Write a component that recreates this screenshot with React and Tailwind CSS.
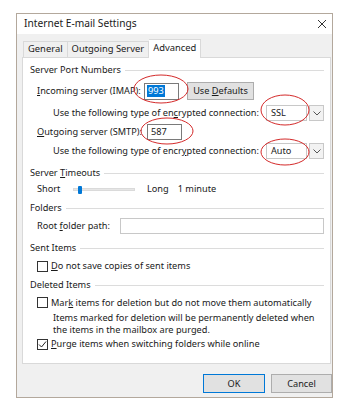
import React from 'react';

const FONT = { fontFamily: '"Noto Sans", "Open Sans", Arial, sans-serif' };

function U({ children }) {
  return <span className="underline underline-offset-[1px]">{children}</span>;
}

function Section({ title, className = '' }) {
  return (
    <div className={`flex items-center h-[16px] pl-[7px] pr-[6px] ${className}`}>
      <span>{title}</span>
      <div className="flex-1 h-px bg-[#dcdcdc] ml-[4px]" />
    </div>
  );
}

function Combo({ value }) {
  return (
    <div className="flex h-[16px]">
      <div className="w-[41px] h-full border border-[#c8c8c8] bg-white flex items-center pl-[4px]">{value}</div>
      <div className="w-[15px] h-full border border-[#c8c8c8] bg-[#f2f2f2] flex items-center justify-center ml-[2px]">
        <svg width="8" height="5" viewBox="0 0 8 5" fill="none">
          <path d="M0.5 0.5L4 4L7.5 0.5" stroke="#555" strokeWidth="1" />
        </svg>
      </div>
    </div>
  );
}

function Check({ checked }) {
  return (
    <div className="w-[11px] h-[11px] border border-[#333] bg-white flex items-center justify-center mr-[3px] shrink-0">
      {checked && (
        <svg width="9" height="9" viewBox="0 0 9 9" fill="none">
          <path d="M1 4.5L3.5 7L8 1.5" stroke="#222" strokeWidth="1" />
        </svg>
      )}
    </div>
  );
}

export default function App() {
  return (
    <div className="w-[345px] h-[400px] bg-white pt-[13px] pl-[16px] text-[9.2px] text-[#1a1a1a] whitespace-nowrap" style={FONT}>
      <div className="relative w-[317px] h-[385px] border border-[#b3a89c] bg-[#f0f0f0] flex flex-col">
        {/* title bar */}
        <div className="h-[20px] bg-white flex items-center justify-between pl-[7px] pr-[5px]">
          <span className="text-[10.2px]">Internet E-mail Settings</span>
          <svg width="10" height="10" viewBox="0 0 10 10" fill="none">
            <path d="M1 1L9 9M9 1L1 9" stroke="#333" strokeWidth="1" />
          </svg>
        </div>

        {/* tabs */}
        <div className="flex items-end pl-[6px] pt-[4px] h-[23px] text-[9.4px]">
          <div className="h-[16px] px-[4px] border border-[#d9d9d9] border-b-0 bg-[#f0f0f0] flex items-center">General</div>
          <div className="h-[16px] px-[4px] border border-[#d9d9d9] border-b-0 border-l-0 bg-[#f0f0f0] flex items-center">Outgoing Server</div>
          <div className="h-[19px] px-[4px] border border-[#d9d9d9] border-b-0 border-l-0 bg-white flex items-start pt-[1px] relative top-px z-10">Advanced</div>
        </div>

        {/* panel */}
        <div className="ml-[5px] mr-px h-[307px] bg-white border border-[#d9d9d9] pt-[4px] flex flex-col">
          <Section title="Server Port Numbers" />
          <div className="flex items-center h-[26px] pl-[14px]">
            <span className="w-[107px]"><U>I</U>ncoming server (IMAP):</span>
            <div className="w-[35px] h-[17px] border border-[#7a7a7a] bg-white flex items-center pl-[2px]">
              <span className="bg-[#0078d7] text-white px-[1px] leading-[12px]">993</span>
            </div>
            <div className="ml-[8px] w-[67px] h-[18px] border border-[#adadad] bg-[#e1e1e1] flex items-center justify-center">
              Use&nbsp;<U>D</U>efaults
            </div>
          </div>
          <div className="flex items-center justify-between h-[18px] pl-[30px] pr-[6px]">
            <span>Use the following type of en<U>c</U>rypted connection:</span>
            <Combo value="SSL" />
          </div>
          <div className="flex items-center h-[20px] pl-[14px]">
            <span className="w-[110px]"><U>O</U>utgoing server (SMTP):</span>
            <div className="w-[35px] h-[16px] border border-[#7a7a7a] bg-white flex items-center pl-[3px]">587</div>
          </div>
          <div className="flex items-center justify-between h-[18px] pl-[30px] pr-[6px]">
            <span>Use the following type of encr<U>y</U>pted connection:</span>
            <Combo value="Auto" />
          </div>

          <Section title={<>Server <U>T</U>imeouts</>} className="mt-[5px]" />
          <div className="flex items-center h-[16px] pl-[14px]">
            <span className="w-[36px]">Short</span>
            <div className="relative w-[62px] h-[3px] bg-[#e6e6e6] border border-[#dadada]">
              <div className="absolute left-[4px] -top-[3px] w-[4px] h-[8px] bg-[#0078d7] rounded-[1px]" />
            </div>
            <span className="ml-[12px]">Long</span>
            <span className="ml-[9px]">1 minute</span>
          </div>

          <Section title="Folders" className="mt-[3px]" />
          <div className="flex items-center h-[20px] pl-[14px] pr-[6px]">
            <span className="w-[83px]">Root <U>f</U>older path:</span>
            <div className="flex-1 h-[16px] border border-[#c8c8c8] bg-white" />
          </div>

          <Section title="Sent Items" className="mt-[4px]" />
          <div className="flex items-center h-[20px] pl-[14px]">
            <Check />
            <span><U>D</U>o not save copies of sent items</span>
          </div>

          <Section title="Deleted Items" className="mt-[1px]" />
          <div className="flex items-center h-[19px] pl-[14px]">
            <Check />
            <span>Mar<U>k</U> items for deletion but do not move them automatically</span>
          </div>
          <div className="pl-[30px] leading-[12px]">
            Items marked for deletion will be permanently deleted when
            <br />
            the items in the mailbox are purged.
          </div>
          <div className="flex items-center h-[16px] pl-[14px]">
            <Check checked />
            <span><U>P</U>urge items when switching folders while online</span>
          </div>
        </div>

        {/* footer */}
        <div className="flex justify-end gap-[6px] pt-[10px]">
          <div className="w-[62px] h-[19px] border border-[#0078d7] bg-[#e1e1e1] flex items-center justify-center">OK</div>
          <div className="w-[61px] h-[19px] border border-[#adadad] bg-[#e1e1e1] flex items-center justify-center">Cancel</div>
        </div>

        {/* red annotation ellipses */}
        <svg className="absolute left-0 top-0 pointer-events-none" width="317" height="385" viewBox="0 0 317 385" fill="none">
          <ellipse cx="144" cy="75" rx="27" ry="14" stroke="#d42a2a" strokeWidth="1" />
          <ellipse cx="268" cy="96" rx="24" ry="15" stroke="#d42a2a" strokeWidth="1" />
          <ellipse cx="150" cy="117" rx="26" ry="13" stroke="#d42a2a" strokeWidth="1" />
          <ellipse cx="268" cy="138" rx="24" ry="13" stroke="#d42a2a" strokeWidth="1" />
        </svg>
      </div>
    </div>
  );
}
